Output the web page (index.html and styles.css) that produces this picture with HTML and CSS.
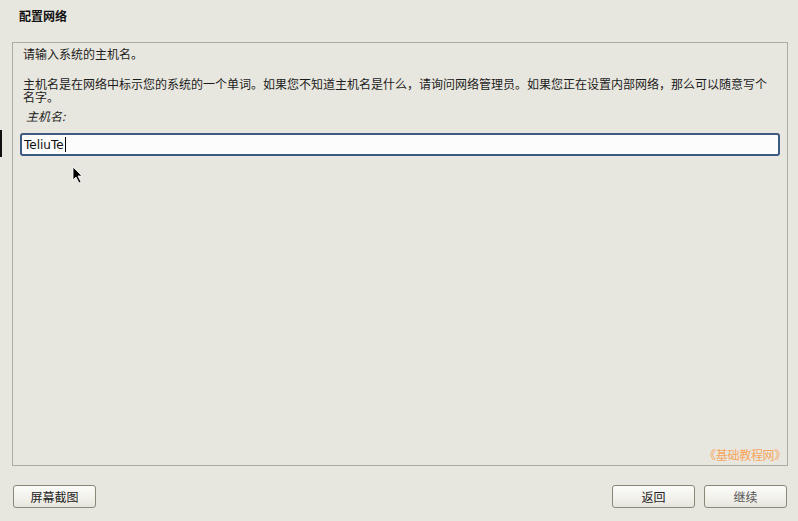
FILE: index.html
```html
<!DOCTYPE html>
<html lang="zh-CN">
<head>
<meta charset="utf-8">
<title>配置网络</title>
<link rel="stylesheet" href="styles.css">
</head>
<body>
<div class="screen">
  <header class="title">配置网络</header>
  <section class="panel">
    <p class="intro">请输入系统的主机名。</p>
    <p class="desc">主机名是在网络中标示您的系统的一个单词。如果您不知道主机名是什么，请询问网络管理员。如果您正在设置内部网络，那么可以随意写个名字。</p>
    <div class="label">主机名:</div>
    <div class="field"><span class="value">TeliuTe</span><span class="caret"></span></div>
    <div class="watermark">《基础教程网》</div>
  </section>
  <footer class="footer">
    <button class="btn">屏幕截图</button>
    <div class="nav">
      <button class="btn">返回</button>
      <button class="btn btn-dim">继续</button>
    </div>
  </footer>
  <div class="edge-bar"></div>
  <svg class="pointer" width="12" height="18" viewBox="0 0 12 18"><path d="M1 1 L1 14 L4 11 L7 17 L9 16 L6 10 L10 10 Z" fill="#000" stroke="#fff" stroke-width="0.8"/></svg>
</div>
</body>
</html>
```

FILE: styles.css
```css
html, body {
  margin: 0;
  padding: 0;
  background: #e8e7df;
}
.screen {
  position: relative;
  width: 798px;
  height: 521px;
  display: flex;
  flex-direction: column;
  font-family: "Noto Sans CJK SC", "DejaVu Sans", sans-serif;
  font-size: 12px;
  color: #1c1c1c;
  overflow: hidden;
}
.title {
  height: 42px;
  box-sizing: border-box;
  padding: 8px 0 0 19px;
  font-weight: bold;
  line-height: 16px;
  color: #111;
}
.panel {
  position: relative;
  margin-left: 12px;
  width: 776px;
  height: 424px;
  box-sizing: border-box;
  border: 1px solid #aeaca2;
  padding: 4px 12px 0 10px;
}
.panel p {
  margin: 0;
  line-height: 13px;
}
.desc {
  margin-top: 17px !important;
}
.label {
  margin: 6px 0 0 3px;
  line-height: 13px;
  font-style: italic;
  color: #222;
}
.field {
  margin: 11px 0 0 -3px;
  width: 760px;
  height: 23px;
  box-sizing: border-box;
  border: 2px solid #3d5a80;
  border-radius: 3px;
  background: #fbfcfb;
  display: flex;
  align-items: center;
  padding-left: 2px;
  font-family: "DejaVu Sans", sans-serif;
  font-size: 12px;
  color: #111;
}
.caret {
  width: 1px;
  height: 15px;
  background: #000;
  margin-left: 1px;
}
.watermark {
  position: absolute;
  right: 1px;
  bottom: 3px;
  font-size: 12px;
  letter-spacing: -0.3px;
  color: #f7a55b;
  line-height: 14px;
}
.footer {
  display: flex;
  justify-content: space-between;
  padding: 19px 11px 0 13px;
}
.nav {
  display: flex;
  gap: 9px;
}
.btn {
  width: 83px;
  height: 23px;
  border: 1px solid #8a8778;
  border-radius: 3px;
  background: linear-gradient(#fbfbf9, #f1f0ea 60%, #e6e4dc);
  font-family: "Noto Sans CJK SC", "DejaVu Sans", sans-serif;
  font-size: 12px;
  color: #222;
  padding: 0;
}
.btn-dim {
  color: #555;
}
.edge-bar {
  position: absolute;
  left: 0;
  top: 130px;
  width: 2px;
  height: 27px;
  background: #111;
}
.pointer {
  position: absolute;
  left: 72px;
  top: 166px;
}
```
